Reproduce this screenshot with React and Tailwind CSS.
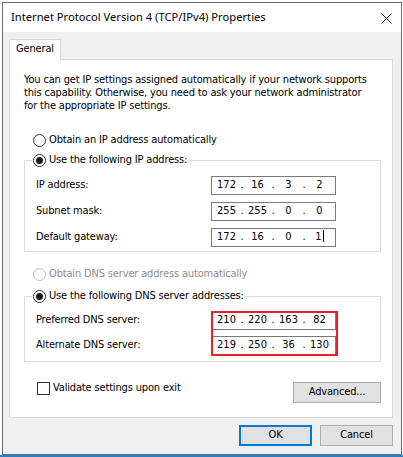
import { Fragment } from 'react';

// TCP/IPv4 properties dialog (Windows 10 look)

function Radio({ checked, disabled }) {
  return (
    <span
      className={`flex h-[13px] w-[13px] shrink-0 items-center justify-center rounded-full border bg-white ${
        disabled ? 'border-[#bcbcbc]' : 'border-[#333333]'
      }`}
    >
      {checked && <span className="h-[7px] w-[7px] rounded-full bg-[#1a1a1a]" />}
    </span>
  );
}

function RadioRow({ label, checked, disabled }) {
  return (
    <div className={`flex h-[16px] items-center gap-[3px] ${disabled ? 'text-[#8d8d8d]' : 'text-black'}`}>
      <Radio checked={checked} disabled={disabled} />
      <span className="whitespace-nowrap">{label}</span>
    </div>
  );
}

function IpField({ parts, caret }) {
  return (
    <div className="flex h-[19px] w-[125px] items-center border border-[#7a7a7a] bg-white pl-px tracking-normal">
      {parts.map((p, i) => (
        <Fragment key={i}>
          <span className="w-[27px] text-center">
            {p}
            {caret && i === 3 && (
              <span className="ml-[1px] inline-block h-[12px] w-px bg-black align-[-2px]" />
            )}
          </span>
          {i < 3 && <span className="w-[4px] text-center">.</span>}
        </Fragment>
      ))}
    </div>
  );
}

function FieldRow({ label, parts, caret }) {
  return (
    <div className="flex h-[19px] items-center">
      <span className="w-[175px] whitespace-nowrap">{label}</span>
      <IpField parts={parts} caret={caret} />
    </div>
  );
}

function Button({ children, primary, className = '' }) {
  return (
    <button
      className={`flex h-[21px] items-center justify-center bg-[#e1e1e1] ${
        primary ? 'border-2 border-[#0078d7]' : 'border border-[#adadad]'
      } ${className}`}
    >
      {children}
    </button>
  );
}

export default function App() {
  return (
    <div className="flex h-[457px] w-[403px] flex-col bg-white font-['DejaVu_Sans_Condensed','Liberation_Sans',sans-serif] text-[11px] tracking-[-0.16px] text-black">
      <div className="flex pl-[2px] pt-[2px]">
        <div className="flex h-[453px] w-[400px] flex-col border border-[#6b6b6b] bg-[#f0f0f0]">
          {/* Title bar */}
          <div className="flex h-[29px] items-center justify-between bg-white pl-[8px] pr-[9px]">
            <span className="font-['Noto_Sans','Liberation_Sans',sans-serif] text-[11.2px] tracking-normal text-black">
              Internet Protocol Version 4 (TCP/IPv4) Properties
            </span>
            <svg width="11" height="11" viewBox="0 0 11 11" className="mt-[1px]">
              <path d="M0.5 0.5 L10.5 10.5 M10.5 0.5 L0.5 10.5" stroke="#111" strokeWidth="1" fill="none" />
            </svg>
          </div>

          {/* Body */}
          <div className="flex flex-1 flex-col pl-[6px] pr-[8px] pt-[7px]">
            <div className="relative z-10 -mb-px flex h-[21px] w-[52px] items-center justify-center border-x border-t border-[#d9d9d9] bg-white pb-[1px]">
              General
            </div>

            <div className="flex h-[359px] w-[384px] flex-col border border-[#d9d9d9] bg-white pl-[14px] pr-[11px] pt-[13px]">
              <p className="leading-[13px]">
                You can get IP settings assigned automatically if your network supports
                <br />
                this capability. Otherwise, you need to ask your network administrator
                <br />
                for the appropriate IP settings.
              </p>

              <div className="ml-[9px] mt-[20px]">
                <RadioRow label="Obtain an IP address automatically" />
              </div>

              <fieldset className="mt-[4px] border border-[#dcdcdc] pb-[4px] pl-[7px] pt-[8px]">
                <legend className="px-px">
                  <RadioRow label="Use the following IP address:" checked />
                </legend>
                <div className="flex flex-col gap-[7px] pl-[4px]">
                  <FieldRow label="IP address:" parts={['172', '16', '3', '2']} />
                  <FieldRow label="Subnet mask:" parts={['255', '255', '0', '0']} />
                  <FieldRow label="Default gateway:" parts={['172', '16', '0', '1']} caret />
                </div>
              </fieldset>

              <div className="ml-[9px] mt-[14px]">
                <RadioRow label="Obtain DNS server address automatically" disabled />
              </div>

              <fieldset className="mt-[6px] border border-[#dcdcdc] pb-[6px] pl-[7px] pt-[7px]">
                <legend className="px-px">
                  <RadioRow label="Use the following DNS server addresses:" checked />
                </legend>
                <div className="relative flex flex-col gap-[6px] pl-[4px]">
                  <FieldRow label="Preferred DNS server:" parts={['210', '220', '163', '82']} />
                  <FieldRow label="Alternate DNS server:" parts={['219', '250', '36', '130']} />
                  {/* red highlight drawn over both DNS fields */}
                  <div className="pointer-events-none absolute left-[179px] top-0 h-[45px] w-[127px] border-2 border-[#e8202a]" />
                </div>
              </fieldset>

              <div className="mt-[16px] flex items-start justify-between">
                <div className="ml-[13px] mt-[2px] flex h-[16px] items-center gap-[3px]">
                  <span className="h-[13px] w-[13px] border border-[#333333] bg-white" />
                  <span>Validate settings upon exit</span>
                </div>
                <Button className="mt-[4px] w-[88px]">Advanced...</Button>
              </div>
            </div>

            <div className="mt-[7px] flex justify-end gap-[8px]">
              <Button primary className="w-[73px]">OK</Button>
              <Button className="w-[73px]">Cancel</Button>
            </div>
          </div>
        </div>
      </div>
      <div className="h-[2px] bg-[#1b86d6]" />
    </div>
  );
}
